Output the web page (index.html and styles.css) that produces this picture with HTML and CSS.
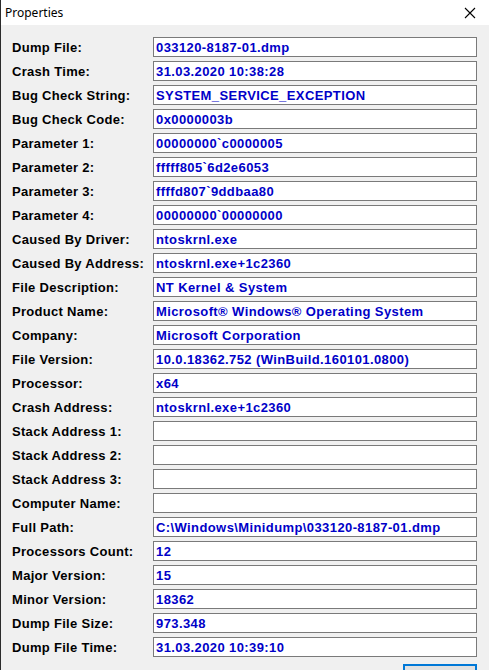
FILE: index.html
```html
<!DOCTYPE html>
<html lang="en">
<head>
    <meta charset="UTF-8">
    <title>Properties</title>
    <link rel="stylesheet" href="styles.css">
</head>
<body>
    <div class="ventana">
        <div class="titulo">
            <span class="titulo-texto">Properties</span>
            <svg class="cerrar" width="12" height="12" viewBox="0 0 12 12">
                <path d="M1 1 L11 11 M11 1 L1 11" stroke="#000" stroke-width="1.1" fill="none"/>
            </svg>
        </div>

        <div class="contenido">
            <div class="fila"><label>Dump File:</label><div class="valor">033120-8187-01.dmp</div></div>
            <div class="fila"><label>Crash Time:</label><div class="valor">31.03.2020 10:38:28</div></div>
            <div class="fila"><label>Bug Check String:</label><div class="valor">SYSTEM_SERVICE_EXCEPTION</div></div>
            <div class="fila"><label>Bug Check Code:</label><div class="valor">0x0000003b</div></div>
            <div class="fila"><label>Parameter 1:</label><div class="valor">00000000`c0000005</div></div>
            <div class="fila"><label>Parameter 2:</label><div class="valor">fffff805`6d2e6053</div></div>
            <div class="fila"><label>Parameter 3:</label><div class="valor">ffffd807`9ddbaa80</div></div>
            <div class="fila"><label>Parameter 4:</label><div class="valor">00000000`00000000</div></div>
            <div class="fila"><label>Caused By Driver:</label><div class="valor">ntoskrnl.exe</div></div>
            <div class="fila"><label>Caused By Address:</label><div class="valor">ntoskrnl.exe+1c2360</div></div>
            <div class="fila"><label>File Description:</label><div class="valor">NT Kernel &amp; System</div></div>
            <div class="fila"><label>Product Name:</label><div class="valor">Microsoft® Windows® Operating System</div></div>
            <div class="fila"><label>Company:</label><div class="valor">Microsoft Corporation</div></div>
            <div class="fila"><label>File Version:</label><div class="valor">10.0.18362.752 (WinBuild.160101.0800)</div></div>
            <div class="fila"><label>Processor:</label><div class="valor">x64</div></div>
            <div class="fila"><label>Crash Address:</label><div class="valor">ntoskrnl.exe+1c2360</div></div>
            <div class="fila"><label>Stack Address 1:</label><div class="valor"></div></div>
            <div class="fila"><label>Stack Address 2:</label><div class="valor"></div></div>
            <div class="fila"><label>Stack Address 3:</label><div class="valor"></div></div>
            <div class="fila"><label>Computer Name:</label><div class="valor"></div></div>
            <div class="fila"><label>Full Path:</label><div class="valor">C:\Windows\Minidump\033120-8187-01.dmp</div></div>
            <div class="fila"><label>Processors Count:</label><div class="valor">12</div></div>
            <div class="fila"><label>Major Version:</label><div class="valor">15</div></div>
            <div class="fila"><label>Minor Version:</label><div class="valor">18362</div></div>
            <div class="fila"><label>Dump File Size:</label><div class="valor">973.348</div></div>
            <div class="fila"><label>Dump File Time:</label><div class="valor">31.03.2020 10:39:10</div></div>

            <div class="botones">
                <button class="boton" aria-label="OK"></button>
            </div>
        </div>
    </div>
</body>
</html>
```

FILE: styles.css
```css
html,
body {
    margin: 0;
    padding: 0;
    height: 670px;
    overflow: hidden;
    background: #f0f0f0;
}

.ventana {
    height: 670px;
    border-left: 1px solid #2b2b2b;
    box-sizing: border-box;
    background: #f0f0f0;
}

.titulo {
    height: 25px;
    background: #fff;
    display: flex;
    align-items: center;
    justify-content: space-between;
    padding: 0 13px 0 4px;
}

.titulo-texto {
    font-family: 'Noto Sans', 'Open Sans', sans-serif;
    font-size: 12px;
    color: #000;
}

.cerrar {
    display: block;
}

.contenido {
    padding: 12px 12px 0 11px;
}

.fila {
    display: flex;
    align-items: center;
    height: 20px;
    margin-bottom: 4px;
}

label {
    width: 141px;
    flex-shrink: 0;
    font-family: 'Liberation Sans', Arial, sans-serif;
    font-weight: bold;
    font-size: 13px;
    letter-spacing: 0.3px;
    color: #000;
}

.valor {
    flex: 1;
    height: 20px;
    box-sizing: border-box;
    border: 1px solid #7a7a7a;
    background: #fff;
    padding: 1px 2px 0;
    font-family: 'Liberation Sans', Arial, sans-serif;
    font-weight: bold;
    font-size: 13px;
    letter-spacing: 0.4px;
    line-height: 17px;
    color: #0000c8;
    white-space: nowrap;
    overflow: hidden;
}

.botones {
    display: flex;
    justify-content: flex-end;
    margin-top: 7px;
}

.boton {
    width: 74px;
    height: 24px;
    border: 2px solid #0078d7;
    background: #e1e1e1;
}
```
